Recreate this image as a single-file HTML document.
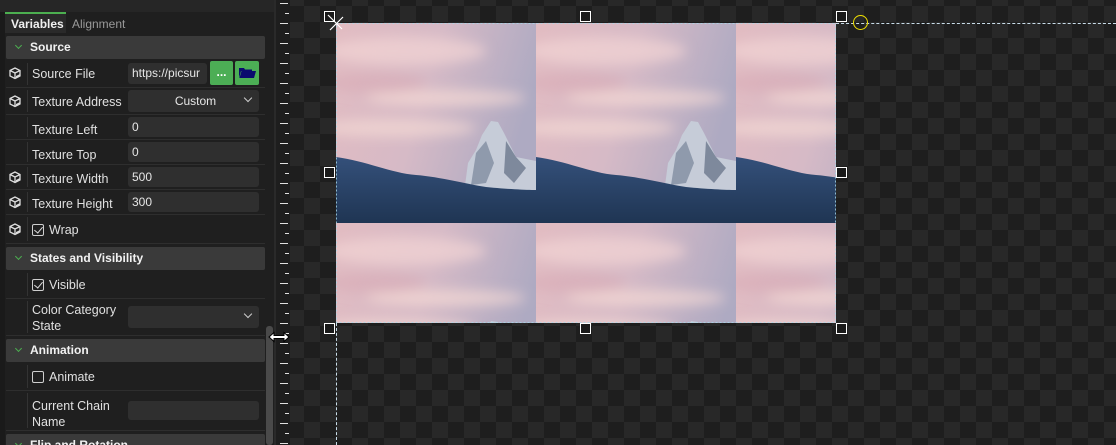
<!DOCTYPE html>
<html style="width:1116px;height:445px;overflow:hidden"><head><meta charset="utf-8"><style>
*{margin:0;padding:0;box-sizing:border-box}
body{width:1116px;height:445px;overflow:hidden;background:#1e1e1e;font-family:"Liberation Sans",sans-serif;font-size:12px;color:#e6e6e6;position:relative}
.a{position:absolute}
#panel{left:0;top:0;width:276px;height:445px;background:#1f1f1f;overflow:hidden}
.hdr{position:absolute;left:6px;width:259px;height:23px;background:#3a3a3a;border-radius:2px;font-weight:bold;color:#f2f2f2;line-height:23px;padding-left:24px}
.hdr:before{content:"";position:absolute;left:10px;top:7px;width:4px;height:4px;border-right:1.3px solid #4caf50;border-bottom:1.3px solid #4caf50;transform:rotate(45deg)}
.row{position:absolute;left:6px;width:259px;border-bottom:1px solid #2e2e2e}
.row .div{position:absolute;left:21px;top:2px;bottom:2px;width:1px;background:#333}
.lbl{position:absolute;left:32px;color:#e0e0e0;font-size:12.5px}
.inp{position:absolute;left:128px;width:131px;height:20px;background:#2f2f2f;border-radius:3px;padding-left:4px;line-height:20px;color:#e6e6e6}
.ico{position:absolute;left:8px;width:14px;height:14px}
.cb{display:inline-block;width:12px;height:12px;border:1px solid #cfcfcf;border-radius:2px;vertical-align:-2px;margin-right:5px;position:relative}
.cb.k:after{content:"";position:absolute;left:3px;top:0px;width:4px;height:7px;border-right:1.5px solid #ddd;border-bottom:1.5px solid #ddd;transform:rotate(40deg)}
.chev{position:absolute;right:8px;top:5px;width:6px;height:6px;border-right:1.4px solid #ccc;border-bottom:1.4px solid #ccc;transform:rotate(45deg)}
.h{position:absolute;width:11px;height:11px;border:1px solid #fff;background:#1a1a1a}
</style></head><body>
<div id="panel" class="a">
 <div class="a" style="left:0;top:0;width:276px;height:12px;background:#262626"></div>
 <div class="a" style="left:0;top:12px;width:5px;height:433px;background:#1a1a1a"></div>
 <div class="a" style="left:5px;top:12px;width:61px;height:21px;background:#2a2a2a;border-top:2px solid #4caf50;font-weight:bold;color:#f0f0f0;line-height:20px;padding-left:6px">Variables</div>
 <div class="a" style="left:72px;top:14px;color:#9a9a9a;line-height:20px">Alignment</div>

 <div class="hdr" style="top:36px">Source</div>
 <svg width="0" height="0" style="position:absolute"><defs><g id="cube"><path d="M2 4.5 L7 2 L12 4.5 L12 10 L7 12.5 L2 10Z M2 4.5 L7 7 L12 4.5 M7 7 L7 12.5" fill="none" stroke="#ddd" stroke-width="1.3"/><path d="M8 10 L12 8 L12 10 L8 12Z" fill="#ddd"/></g></defs></svg>

 <div class="row" style="top:61px;height:27px"><div class="div"></div></div>
 <svg class="ico" style="top:66px" viewBox="0 0 14 14"><use href="#cube"/></svg>
 <div class="lbl" style="top:67px">Source File</div>
 <div class="inp" style="top:63px;width:79px;height:21px;line-height:21px;overflow:hidden;white-space:nowrap">https://picsur</div>
 <div class="a" style="left:210px;top:61px;width:23px;height:24px;background:#4cae55;border-radius:2px;color:#fff;font-weight:bold;text-align:center;line-height:22px">...</div>
 <div class="a" style="left:235px;top:61px;width:24px;height:24px;background:#4cae55;border-radius:2px"><svg width="24" height="24"><path d="M4 7 h5 l1 1.5 h7 v1.5 h-11 l-2 7z" fill="#0a0a6e"/><path d="M6.5 10 H21 L19 17 H4.5Z" fill="#0a0a6e"/></svg></div>

 <div class="row" style="top:88px;height:27px"><div class="div"></div></div>
 <svg class="ico" style="top:94px" viewBox="0 0 14 14"><use href="#cube"/></svg>
 <div class="lbl" style="top:95px">Texture Address</div>
 <div class="inp" style="top:90px;height:22px;text-align:center;line-height:22px">Custom<div class="chev"></div></div>

 <div class="row" style="top:115px;height:25px"><div class="div"></div></div>
 <div class="lbl" style="top:123px">Texture Left</div>
 <div class="inp" style="top:117px;height:20px;line-height:20px">0</div>

 <div class="row" style="top:140px;height:25px"><div class="div"></div></div>
 <div class="lbl" style="top:148px">Texture Top</div>
 <div class="inp" style="top:142px">0</div>

 <div class="row" style="top:165px;height:25px"><div class="div"></div></div>
 <svg class="ico" style="top:170px" viewBox="0 0 14 14"><use href="#cube"/></svg>
 <div class="lbl" style="top:172px">Texture Width</div>
 <div class="inp" style="top:167px">500</div>

 <div class="row" style="top:190px;height:25px"><div class="div"></div></div>
 <svg class="ico" style="top:195px" viewBox="0 0 14 14"><use href="#cube"/></svg>
 <div class="lbl" style="top:197px">Texture Height</div>
 <div class="inp" style="top:192px">300</div>

 <div class="row" style="top:215px;height:29px"><div class="div"></div></div>
 <svg class="ico" style="top:222px" viewBox="0 0 14 14"><use href="#cube"/></svg>
 <div class="lbl" style="top:223px"><span class="cb k"></span>Wrap</div>

 <div class="hdr" style="top:247px">States and Visibility</div>
 <div class="row" style="top:271px;height:28px"><div class="div"></div></div>
 <div class="lbl" style="top:278px"><span class="cb k"></span>Visible</div>
 <div class="row" style="top:299px;height:37px"><div class="div"></div></div>
 <div class="lbl" style="top:302px;line-height:16px">Color Category<br>State</div>
 <div class="inp" style="top:306px;height:22px"><div class="chev"></div></div>

 <div class="hdr" style="top:339px">Animation</div>
 <div class="row" style="top:363px;height:28px"><div class="div"></div></div>
 <div class="lbl" style="top:370px"><span class="cb"></span>Animate</div>
 <div class="row" style="top:391px;height:40px"><div class="div"></div></div>
 <div class="lbl" style="top:398px;line-height:16px">Current Chain<br>Name</div>
 <div class="inp" style="top:401px;height:19px"></div>
 <div class="hdr" style="top:434px;height:23px">Flip and Rotation</div>
 <div class="a" style="left:266px;top:326px;width:7px;height:119px;background:#4a4a4a;border-radius:3px"></div>
 <div class="a" style="left:274px;top:0;width:2px;height:445px;background:#2a2a2a"></div>
</div>

<!-- checker -->
<div class="a" style="left:290px;top:0;width:826px;height:445px;background-color:#1e1e1e;background-image:linear-gradient(45deg,#282828 25%,transparent 25%,transparent 75%,#282828 75%),linear-gradient(45deg,#282828 25%,transparent 25%,transparent 75%,#282828 75%);background-size:32px 32px;background-position:14px -10px,30px 6px"></div>

<!-- image -->
<svg class="a" style="left:336px;top:23px" width="500" height="300">
 <defs>
  <linearGradient id="sky" x1="0" y1="0" x2="1" y2="0.3">
   <stop offset="0" stop-color="#e2bcc2"/><stop offset="0.5" stop-color="#d6bac6"/><stop offset="1" stop-color="#aeaac2"/>
  </linearGradient>
  <linearGradient id="snow" x1="0" y1="0" x2="0" y2="1">
   <stop offset="0" stop-color="#34507a"/><stop offset="1" stop-color="#1f3553"/>
  </linearGradient>
  <filter id="bl"><feGaussianBlur stdDeviation="6"/></filter>
  <pattern id="tile" width="200" height="200" patternUnits="userSpaceOnUse">
   <rect width="200" height="200" fill="url(#sky)"/>
   <g filter="url(#bl)">
   <ellipse cx="70" cy="28" rx="80" ry="14" fill="#f2d4d4" opacity="0.7"/>
   <ellipse cx="110" cy="75" rx="80" ry="8" fill="#f6dcd6" opacity="0.7"/>
   <ellipse cx="60" cy="105" rx="80" ry="9" fill="#f4d8d4" opacity="0.7"/>
   <ellipse cx="40" cy="60" rx="50" ry="10" fill="#d8a8b4" opacity="0.5"/>
   </g>
   <path d="M128 170 L132 140 L140 127 L146 112 L155 98 L162 99 L168 110 L174 122 L180 134 L190 136 L200 138 L200 170Z" fill="#c6ccd8"/>
   <path d="M140 130 L150 118 L158 140 L150 160 L135 162Z" fill="#6b7890" opacity="0.6"/>
   <path d="M170 118 L180 134 L190 145 L178 160 L168 150Z" fill="#4e5c75" opacity="0.6"/>
   <path d="M0 134 C30 138 55 150 80 152 C105 154 130 161 150 164 C170 166 190 167 200 167 L200 200 L0 200Z" fill="url(#snow)"/>
  </pattern>
 </defs>
 <rect width="500" height="300" fill="url(#tile)"/>
 <rect x="0.5" y="0.5" width="499" height="299" fill="none" stroke="#a8d8e8" stroke-width="1" stroke-dasharray="2 2" opacity="0.8"/>
</svg>

<!-- guides -->
<div class="a" style="left:836px;top:23px;width:280px;height:0;border-top:1px dashed #c8dce8"></div>
<div class="a" style="left:336px;top:323px;width:0;height:122px;border-left:1px dashed #c8dce8"></div>
<div class="a" style="left:853px;top:15px;width:15px;height:15px;border:1.5px solid #f0e000;border-radius:50%"></div>

<div class="h" style="left:324px;top:11px"></div>
<svg class="a" style="left:326px;top:13px" width="20" height="20"><path d="M2 2 L16 16 M4 17 L17 4" stroke="#fff" stroke-width="1.2"/></svg>
<div class="h" style="left:580px;top:11px"></div>
<div class="h" style="left:836px;top:11px"></div>
<div class="h" style="left:324px;top:167px"></div>
<div class="h" style="left:836px;top:167px"></div>
<div class="h" style="left:324px;top:323px"></div>
<div class="h" style="left:580px;top:323px"></div>
<div class="h" style="left:836px;top:323px"></div>

<!-- ruler -->
<div class="a" style="left:276px;top:0;width:14px;height:445px;
background:repeating-linear-gradient(to bottom,transparent 0,transparent 3px,#e0e0e0 3px,#e0e0e0 4px,transparent 4px,transparent 20px) 4px 0/8px 445px no-repeat,
repeating-linear-gradient(to bottom,transparent 0,transparent 13px,#e0e0e0 13px,#e0e0e0 14px,transparent 14px,transparent 20px) 9px 0/4px 445px no-repeat,#1e1e1e"></div>

<!-- resize cursor -->
<svg class="a" style="left:267px;top:331px" width="24" height="12"><path d="M2 6 L7 1.5 L7 4.5 L17 4.5 L17 1.5 L22 6 L17 10.5 L17 7.5 L7 7.5 L7 10.5Z" fill="#fff" stroke="#000" stroke-width="1"/></svg>
</body></html>
